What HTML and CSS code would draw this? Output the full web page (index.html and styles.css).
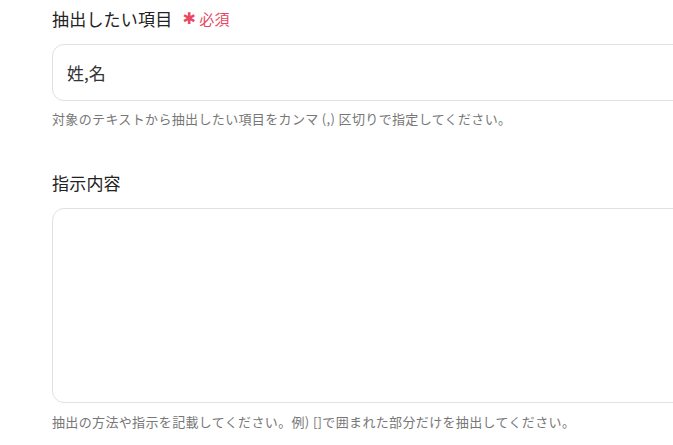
FILE: index.html
```html
<!DOCTYPE html>
<html lang="ja">
<head>
<meta charset="utf-8">
<link rel="stylesheet" href="styles.css">
</head>
<body>
<div class="form">
  <div class="field">
    <div class="label">抽出したい項目<span class="req"><span class="star">✱</span>必須</span></div>
    <div class="input">姓,名</div>
    <div class="help">対象のテキストから抽出したい項目をカンマ (,) 区切りで指定してください。</div>
  </div>
  <div class="field second">
    <div class="label">指示内容</div>
    <div class="textarea"></div>
    <div class="help">抽出の方法や指示を記載してください。例) []で囲まれた部分だけを抽出してください。</div>
  </div>
</div>
</body>
</html>
```
FILE: styles.css
```css
html, body {
  margin: 0;
  padding: 0;
  background: #fff;
  overflow: hidden;
}
body {
  font-family: "Noto Sans CJK JP", "Noto Sans", sans-serif;
  color: #333;
}
.form {
  padding: 6px 0 0 52px;
  width: 680px;
}
.field {
  display: flex;
  flex-direction: column;
}
.second {
  margin-top: 42px;
}
.label {
  font-size: 17px;
  line-height: 26px;
  font-weight: 400;
  color: #222;
  display: flex;
  align-items: center;
  letter-spacing: 0.2px;
}
.req {
  color: #e8475f;
  font-size: 15px;
  font-weight: 400;
  margin-left: 10px;
  display: flex;
  align-items: center;
  letter-spacing: 0.4px;
}
.star {
  font-family: "DejaVu Sans", sans-serif;
  font-size: 16px;
  margin-right: 3px;
}
.input {
  margin-top: 12px;
  height: 57px;
  box-sizing: border-box;
  border: 1px solid #e0e0e6;
  border-radius: 12px;
  padding: 0 14px;
  display: flex;
  align-items: center;
  font-size: 17px;
  color: #333;
}
.textarea {
  margin-top: 12px;
  height: 195px;
  box-sizing: border-box;
  border: 1px solid #e0e0e6;
  border-radius: 12px;
}
.help {
  margin-top: 9px;
  font-size: 13px;
  line-height: 18px;
  color: #777;
  letter-spacing: 0.35px;
}
.second .help {
  margin-top: 10px;
}
```
